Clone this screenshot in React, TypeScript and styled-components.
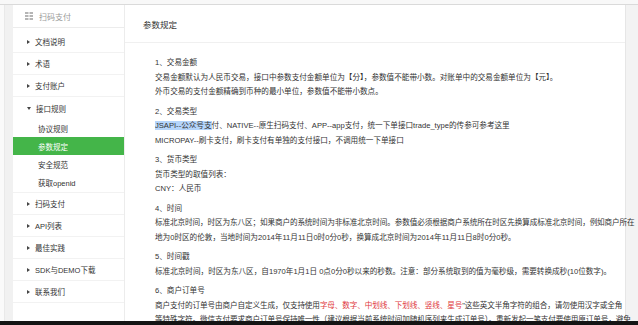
import React from "react";
import styled, { createGlobalStyle } from "styled-components";

const GlobalStyle = createGlobalStyle`
  html, body { margin: 0; padding: 0; }
  body {
    background: #f3f3f3;
    font-family: "Liberation Sans", "Noto Sans CJK SC", sans-serif;
    color: #333;
  }
`;

const Page = styled.div`
  width: 638px;
  height: 325px;
  display: grid;
  grid-template-rows: 5px 1fr 4px;
  overflow: hidden;
`;

const TopBar = styled.div`
  background: #f8f8f8;
  border-bottom: 1px solid #dadada;
  box-sizing: border-box;
`;

const BottomBar = styled.div`
  background: #141414;
`;

const Body = styled.div`
  display: flex;
  padding: 0 12px 0 13px;
  overflow: hidden;
  min-height: 0;
  background: linear-gradient(90deg, #fafafa 0, #fafafa 4px, #e9e9e9 4px, #e9e9e9 5px, #f1f1f1 5px);
  background-size: 13px 100%;
  background-repeat: no-repeat;
`;

const Sidebar = styled.nav`
  width: 111px;
  flex-shrink: 0;
  background: #fff;
  border-right: 1px solid #ececec;
  font-size: 7.5px;
`;

const SideHeader = styled.div`
  height: 23px;
  box-sizing: border-box;
  border-bottom: 1px solid #ececec;
  display: flex;
  align-items: center;
  gap: 6px;
  padding-left: 12px;
  color: #9a9a9a;
  font-size: 8px;
`;

const NavList = styled.div`
  padding-top: 3px;
`;

const NavItem = styled.div`
  height: 22px;
  box-sizing: border-box;
  border-bottom: 1px solid #f2f2f2;
  display: flex;
  align-items: center;
  gap: 5px;
  padding-left: 14px;
  color: #333;
`;

const Group = styled.div`
  border-bottom: 1px solid #f2f2f2;
  padding-bottom: 1px;
`;

const GroupHead = styled(NavItem)`
  border-bottom: none;
`;

const Arrow = styled.span<{ $open?: boolean }>`
  width: 0;
  height: 0;
  border-style: solid;
  ${(p) =>
    p.$open
      ? `border-width: 3px 2.5px 0 2.5px; border-color: #444 transparent transparent transparent; margin-top: 1px;`
      : `border-width: 2.5px 0 2.5px 3px; border-color: transparent transparent transparent #444;`}
`;

const SubItem = styled.div<{ $active?: boolean }>`
  height: 18px;
  display: flex;
  align-items: center;
  padding-left: 25px;
  background: ${(p) => (p.$active ? "#44b549" : "transparent")};
  color: ${(p) => (p.$active ? "#fff" : "#333")};
`;

const Main = styled.main`
  flex: 1;
  background: #fff;
  min-width: 0;
  border-right: 1px solid #e6e6e6;
`;

const MainHeader = styled.div`
  height: 38px;
  box-sizing: border-box;
  border-bottom: 1px solid #f0f0f0;
  display: flex;
  align-items: center;
  padding-left: 18px;
  font-size: 8.5px;
  color: #333;
`;

const Content = styled.div`
  padding: 13px 0 0 30px;
  font-size: 7.6px;
  line-height: 14.5px;
  color: #333;
`;

const Block = styled.section`
  margin-bottom: 5px;
`;

const Line = styled.div<{ $tight?: boolean }>`
  white-space: nowrap;
  letter-spacing: ${(p) => (p.$tight ? "-0.1px" : "0")};
`;

const Red = styled.span`
  color: #e0393e;
`;

const Selected = styled.span`
  background: #b5d5fb;
`;

const GridIcon = () => (
  <svg width="8" height="8" viewBox="0 0 8 8">
    {[0, 3, 6].map((y) =>
      [0, 4.5].map((x) => (
        <rect key={`${x}-${y}`} x={x} y={y} width="3.5" height="2" fill="#b5b5b5" />
      ))
    )}
  </svg>
);

const topItems = ["文档说明", "术语", "支付账户"];
const subItems = ["协议规则", "参数规定", "安全规范", "获取openid"];
const bottomItems = ["扫码支付", "API列表", "最佳实践", "SDK与DEMO下载", "联系我们"];

export default function App() {
  return (
    <>
      <GlobalStyle />
      <Page>
        <TopBar />
        <Body>
          <Sidebar>
            <SideHeader>
              <GridIcon />
              扫码支付
            </SideHeader>
            <NavList>
              {topItems.map((t) => (
                <NavItem key={t}>
                  <Arrow />
                  {t}
                </NavItem>
              ))}
              <Group>
                <GroupHead>
                  <Arrow $open />
                  接口规则
                </GroupHead>
                {subItems.map((t) => (
                  <SubItem key={t} $active={t === "参数规定"}>
                    {t}
                  </SubItem>
                ))}
              </Group>
              {bottomItems.map((t) => (
                <NavItem key={t}>
                  <Arrow />
                  {t}
                </NavItem>
              ))}
            </NavList>
          </Sidebar>
          <Main>
            <MainHeader>参数规定</MainHeader>
            <Content>
              <Block>
                <Line>1、交易金额</Line>
                <Line>交易金额默认为人民币交易，接口中参数支付金额单位为【分】，参数值不能带小数。对账单中的交易金额单位为【元】。</Line>
                <Line>外币交易的支付金额精确到币种的最小单位，参数值不能带小数点。</Line>
              </Block>
              <Block>
                <Line>2、交易类型</Line>
                <Line>
                  <Selected>JSAPI--公众号支</Selected>付、NATIVE--原生扫码支付、APP--app支付，统一下单接口trade_type的传参可参考这里
                </Line>
                <Line>MICROPAY--刷卡支付，刷卡支付有单独的支付接口，不调用统一下单接口</Line>
              </Block>
              <Block>
                <Line>3、货币类型</Line>
                <Line>货币类型的取值列表：</Line>
                <Line>CNY：人民币</Line>
              </Block>
              <Block>
                <Line>4、时间</Line>
                <Line $tight>标准北京时间，时区为东八区；如果商户的系统时间为非标准北京时间。参数值必须根据商户系统所在时区先换算成标准北京时间，例如商户所在</Line>
                <Line>地为0时区的伦敦，当地时间为2014年11月11日0时0分0秒，换算成北京时间为2014年11月11日8时0分0秒。</Line>
              </Block>
              <Block>
                <Line>5、时间戳</Line>
                <Line>标准北京时间，时区为东八区，自1970年1月1日 0点0分0秒以来的秒数。注意：部分系统取到的值为毫秒级，需要转换成秒(10位数字)。</Line>
              </Block>
              <Block>
                <Line>6、商户订单号</Line>
                <Line $tight>
                  商户支付的订单号由商户自定义生成，仅支持使用<Red>字母、数字、中划线、下划线、竖线、星号</Red>"这些英文半角字符的组合，请勿使用汉字或全角
                </Line>
                <Line $tight>等特殊字符。微信支付要求商户订单号保持唯一性（建议根据当前系统时间加随机序列来生成订单号）。重新发起一笔支付要使用原订单号，避免</Line>
              </Block>
            </Content>
          </Main>
        </Body>
        <BottomBar />
      </Page>
    </>
  );
}
